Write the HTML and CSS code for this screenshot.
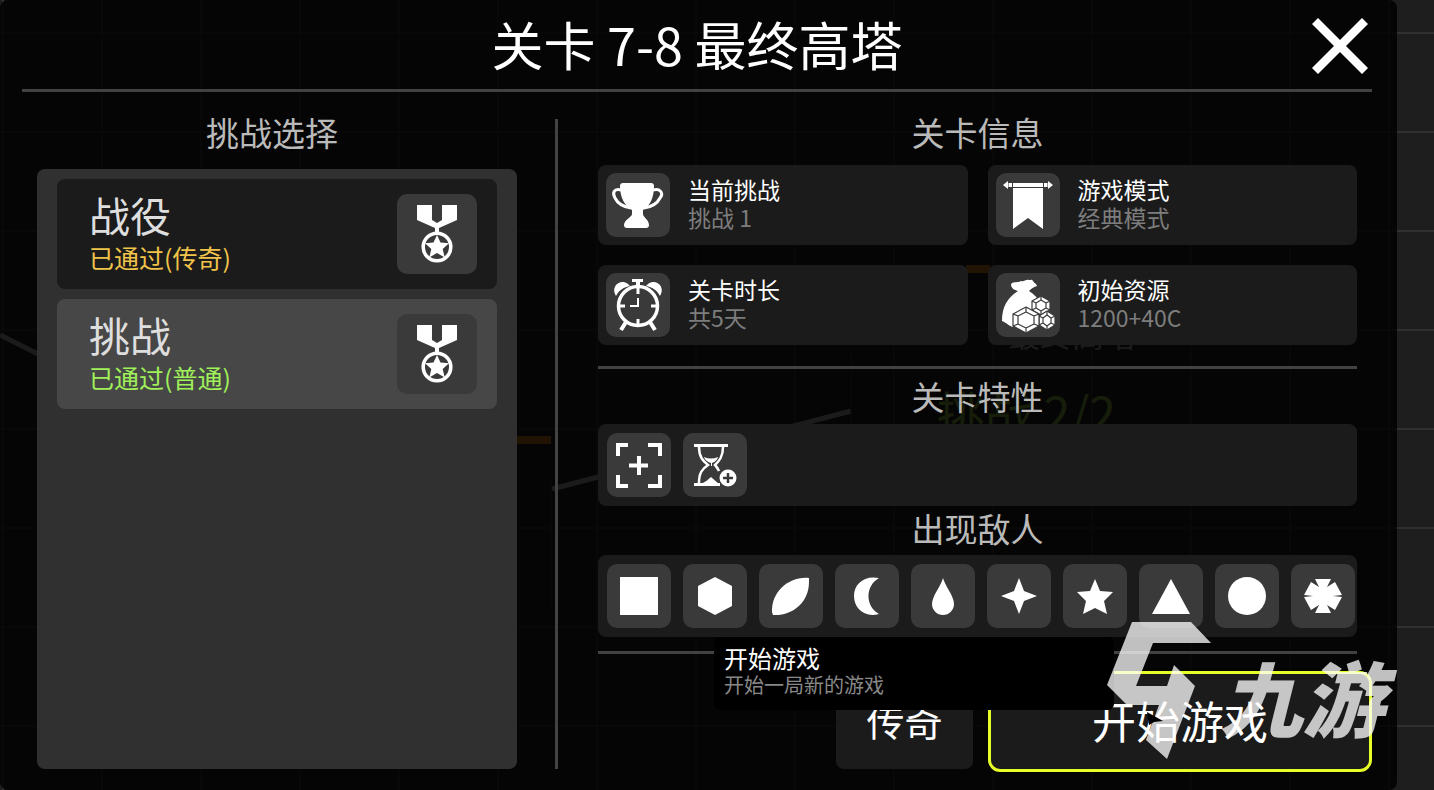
FILE: index.html
```html
<!DOCTYPE html>
<html lang="zh-CN">
<head>
<meta charset="utf-8">
<meta name="viewport" content="width=device-width, initial-scale=1">
<title>关卡 7-8 最终高塔</title>
<link rel="stylesheet" href="styles.css">
</head>
<body>
<svg class="defs" aria-hidden="true">
  <symbol id="medal" viewBox="0 0 80 80">
    <path d="M20 11h15v15l5 3 5-3V11h15v15l-18 8v5h-4v-5L20 26z"/>
    <circle cx="40" cy="53" r="13.8" fill="none" stroke="#fff" stroke-width="3.6"/>
    <path d="M40 41l3.500 7.500 8.500.8-6.300 5.700 2 8.500-7.700-4.500-7.700 4.500 2-8.500-6.300-5.700 8.500-.8z"/>
  </symbol>
</svg>

<div class="map" aria-hidden="true">
  <svg class="map-lines" width="1434" height="790">
    <g stroke="#969696" stroke-width="5">
      <path d="M0 335L40 355M552 489L851 411"/>
    </g>
    <path d="M517 440h34M966 269h24" stroke="#b46e1e" stroke-width="8"/>
    <g stroke="#303030" fill="none"><path d="M-2 480h553v130M851 350v120"/></g>
  </svg>
  <span class="map-name">最终高塔</span>
  <span class="map-progress">挑战 2/2</span>
</div>

<main class="dialog">
  <header class="header">
    <h1 class="title">关卡 7-8 最终高塔</h1>
    <button class="close" aria-label="关闭">
      <svg width="56" height="56" viewBox="0 0 56 56"><path d="M3 3l50 50M53 3L3 53" stroke="#fff" stroke-width="8.500"/></svg>
    </button>
  </header>

  <div class="columns">
    <section class="challenges">
      <h2 class="heading">挑战选择</h2>
      <div class="challenge-list">
        <button class="challenge">
          <span class="challenge-text"><span class="challenge-name">战役</span><span class="status legend">已通过(传奇)</span></span>
          <span class="badge"><svg width="80" height="80"><use href="#medal"/></svg></span>
        </button>
        <button class="challenge selected">
          <span class="challenge-text"><span class="challenge-name">挑战</span><span class="status normal">已通过(普通)</span></span>
          <span class="badge"><svg width="80" height="80"><use href="#medal"/></svg></span>
        </button>
      </div>
    </section>

    <div class="details">
      <section class="block info">
        <h2 class="heading">关卡信息</h2>
        <div class="cards">
          <div class="card">
            <span class="tile"><svg viewBox="0 0 64 64">
              <path d="M17 10h28q3 0 3 3c0 12-4 20-11 24v4c0 3 6 6 6 11q0 3-3 3H21q-3 0-3-3c0-5 8-8 8-11v-4C19 33 14 25 14 13q0-3 3-3z"/>
              <path d="M15 17C8 15 6 20 9 25c3 6 9 9 16 10M47 17c7-2 11 3 7 8-3 6-9 9-16 10" fill="none" stroke="#fff" stroke-width="3"/>
            </svg></span>
            <div class="card-text"><h3>当前挑战</h3><p>挑战 1</p></div>
          </div>
          <div class="card">
            <span class="tile"><svg viewBox="0 0 64 64">
              <path d="M7 12l5-4v8zM12.500 10H16v4h-3.500zM17 10h30v4H17zM48 10h3.500v4H48zM57 12l-5-4v8zM17 15h30v41L32 45 17 56z"/>
            </svg></span>
            <div class="card-text"><h3>游戏模式</h3><p>经典模式</p></div>
          </div>
          <div class="card">
            <span class="tile"><svg viewBox="0 0 64 64">
              <circle cx="32" cy="33" r="19.500" fill="none" stroke="#fff" stroke-width="3.500"/>
              <path d="M26 6h11v3h-3v5h-4V9h-4zM10 23c-6-9 4-18 12-12l2 2c-6 1-11 4-14 10zM54 23c6-9-4-18-12-12l-2 2c6 1 11 4 14 10z"/>
              <path d="M32 12v9M32 54v-8M11 33h8M53 33h-8" fill="none" stroke="#fff" stroke-width="3"/>
              <path d="M32 25v8h-8" fill="none" stroke="#fff" stroke-width="2"/>
              <path d="M20 49l-5 8M44 49l5 8" stroke="#fff" stroke-width="4"/>
            </svg></span>
            <div class="card-text"><h3>关卡时长</h3><p>共5天</p></div>
          </div>
          <div class="card">
            <span class="tile"><svg viewBox="0 0 64 64">
              <path d="M22 18c-4-1-7-3-7-7 3-3 7-1 10-3 3 1 5-2 8-1 2 0 3-1 4 1 2 3 3 2 4 5-4 1-6 3-8 5 5 3 9 7 12 13l-9 22H17v1c-4-1-6-4-11-6 0-14 5-23 16-30z"/>
              <g stroke="#3a3a3a" stroke-width="1.200" stroke-linejoin="round">
                <path d="M45 23l9 5v9l-9 5-9-5v-9z"/><path d="M45 27l5 3v5l-5 3-5-3v-5zM45 23v4M54 28l-4 2M54 37l-4-2M45 42v-4M36 37l4-2M36 28l4 2" fill="none"/>
                <path d="M51 38l8 5v9l-8 5-8-5v-9z"/><path d="M51 42l4 3v5l-4 3-4-3v-5zM51 38v4M59 43l-4 2M59 52l-4-2M51 57v-4M43 52l4-2M43 43l4 2" fill="none"/>
                <path d="M30 34l13 7v12l-13 7-13-7V41z"/><path d="M30 39l8 4v8l-8 4-8-4v-8zM30 34v5M43 41l-5 2M43 53l-5-2M30 60v-5M17 53l5-2M17 41l5 2" fill="none"/>
              </g>
            </svg></span>
            <div class="card-text"><h3>初始资源</h3><p>1200+40C</p></div>
          </div>
        </div>
      </section>

      <section class="block traits">
        <h2 class="heading">关卡特性</h2>
        <div class="tiles">
          <span class="tile"><svg viewBox="0 0 64 64"><path d="M11 23V12h10M41 12h12v11M11 42v11h10M41 53h12V42M32 23v19M22 32.500h19" fill="none" stroke="#fff" stroke-width="4"/></svg></span>
          <span class="tile"><svg viewBox="0 0 64 64">
            <path d="M11 11h34v3H11zM11 50h26v3H11z"/>
            <path d="M16 14c0 10 4 14 9 18-6 4-9 8-9 18M40 14c0 10-4 14-8 18 2 2 3 4 4 6" fill="none" stroke="#fff" stroke-width="2.500"/>
            <path d="M21 24q7 3 14 0-1 4-6 6v3h-1v-3q-6-2-7-6zM18 51q5-2 10-7l8 7z"/>
            <circle cx="45" cy="45" r="8.500"/><path d="M45 40v10M40 45h10" stroke="#3a3a3a" stroke-width="2.500"/>
          </svg></span>
        </div>
      </section>

      <section class="block enemies">
        <h2 class="heading">出现敌人</h2>
        <div class="tiles">
          <span class="tile"><svg viewBox="0 0 64 64"><path d="M13 13h38v38H13z"/></svg></span>
          <span class="tile"><svg viewBox="0 0 64 64"><path d="M32 13l17 9v20l-17 9-17-9V22z"/></svg></span>
          <span class="tile"><svg viewBox="0 0 64 64"><path d="M50 14C30 12 12 28 13 48l1 3C34 52 50 38 50 18z"/></svg></span>
          <span class="tile"><svg viewBox="0 0 64 64"><path d="M44 14C29 11 19 20 19 32s10 22 25 18C30 42 30 22 44 14z"/></svg></span>
          <span class="tile"><svg viewBox="0 0 64 64"><path d="M32 14c2 8 11 18 11 26a11 11 0 0 1-22 0c0-8 9-18 11-26z"/></svg></span>
          <span class="tile"><svg viewBox="0 0 64 64"><path d="M32 14l5 13 13 5-13 5-5 13-5-13-13-5 13-5z"/></svg></span>
          <span class="tile"><svg viewBox="0 0 64 64"><path d="M32 15l5 12 13 1-9 9 3 13-12-6-12 6 3-13-9-9 13-1z"/></svg></span>
          <span class="tile"><svg viewBox="0 0 64 64"><path d="M32 15l19 35H13z"/></svg></span>
          <span class="tile"><svg viewBox="0 0 64 64"><circle cx="32" cy="32" r="19"/></svg></span>
          <span class="tile"><svg viewBox="0 0 64 64"><path d="M24 15h16l-4 8 8-5 7 13-9 1 9 1-7 13-8-5 4 8H24l4-8-8 5-7-13 9-1-9-1 7-13 8 5z"/></svg></span>
        </div>
      </section>

      <footer class="footer">
        <button class="mode">传奇</button>
        <button class="start">开始游戏</button>
        <div class="tooltip" role="tooltip"><strong>开始游戏</strong><span>开始一局新的游戏</span></div>
      </footer>
    </div>
  </div>
</main>

<div class="watermark">
  <svg width="120" height="150" viewBox="0 0 120 150"><path d="M32 7h59l20 21H53L36 71h31l7-21 21 21-28 73-21-19 13-35H27L7 70z"/></svg>
  <span>九游</span>
</div>
<svg class="cursor" width="18" height="14" viewBox="0 0 18 14" aria-hidden="true"><path d="M1 0l16 9-9 1-5 3z" fill="#000"/></svg>
</body>
</html>
```

FILE: styles.css
```css
* { box-sizing: border-box; }

body {
  margin: 0;
  min-height: 100vh;
  position: relative;
  overflow-x: hidden;
  color: #fff;
  font-family: "Noto Sans CJK SC", "Noto Sans", sans-serif;
  background-color: #1e1e1e;
  background-image:
    linear-gradient(#303030 2px, transparent 2px),
    linear-gradient(90deg, #303030 2px, transparent 2px);
  background-size: 99px 99px;
  background-position: 2px 32px;
}

h1, h2, h3, p { margin: 0; font-weight: 400; }

button {
  border: 0;
  padding: 0;
  color: inherit;
  font: inherit;
  cursor: pointer;
}

svg { display: block; fill: #fff; }

.defs { position: absolute; width: 0; height: 0; }

/* Level map behind the dialog */
.map { position: absolute; inset: 0; overflow: hidden; }
.map-lines { fill: none; }
.map-name,
.map-progress { position: absolute; white-space: nowrap; }
.map-name { left: 1008px; top: 310px; font-size: 32px; color: #969696; }
.map-progress { left: 937px; top: 376px; font-size: 48px; color: #7da03c; }

.dialog {
  position: relative;
  display: flex;
  flex-direction: column;
  min-height: 100vh;
  margin-right: 37px;
  padding: 0 25px 18px 22px;
  border-radius: 8px;
  background: rgba(0, 0, 0, 0.82);
}

.header {
  display: grid;
  grid-template-columns: 1fr auto 1fr;
  align-items: center;
  height: 92px;
  padding: 2px 4px 0 4px;
  border-bottom: 3px solid #424242;
}
.title { grid-column: 2; padding-bottom: 4px; font-size: 52px; line-height: 82px; }
.close { justify-self: end; background: none; }

.columns { flex: 1; display: flex; padding-top: 20px; }

.heading {
  padding-bottom: 4px;
  font-size: 33px;
  line-height: 40px;
  text-align: center;
  color: #bababa;
}

.challenges {
  flex: 0 0 536px;
  display: flex;
  flex-direction: column;
  padding: 0 41px 3px 15px;
  position: relative;
}
.challenges::after {
  content: "";
  position: absolute;
  top: 7px;
  right: 0;
  bottom: 3px;
  width: 3px;
  background: #424242;
}
.challenges .heading { padding-right: 10px; }

.challenge-list {
  flex: 1;
  display: flex;
  flex-direction: column;
  gap: 10px;
  margin-top: 13px;
  padding: 10px 20px;
  border-radius: 8px;
  background: #303030;
}
.challenge {
  display: flex;
  align-items: center;
  justify-content: space-between;
  height: 110px;
  padding: 0 20px 0 32px;
  border-radius: 8px;
  background: #1b1b1b;
  text-align: left;
}
.challenge.selected { background: #474747; }
.challenge-text { display: flex; flex-direction: column; padding-bottom: 5px; }
.challenge-name { font-size: 41px; line-height: 50px; color: #dedede; }
.status { font-size: 25px; line-height: 36px; }
.legend { color: #f0c44a; }
.normal { color: #a0f05a; }
.badge { border-radius: 10px; background: #3a3a3a; }

.details {
  flex: 1;
  display: flex;
  flex-direction: column;
  min-width: 0;
  padding-left: 40px;
}
.block { padding-right: 15px; }

.cards {
  display: grid;
  grid-template-columns: 1fr 1fr;
  gap: 20px;
  margin: 9px 0 21px;
}
.card {
  display: flex;
  align-items: center;
  gap: 18px;
  height: 80px;
  padding: 0 8px;
  border-radius: 8px;
  background: #1b1b1b;
}
.card-text { padding-bottom: 4px; }
.card h3 { font-size: 23px; line-height: 28px; }
.card p { font-size: 23px; line-height: 28px; color: #7d7d7d; }

.tile {
  flex: none;
  width: 64px;
  height: 64px;
  border-radius: 10px;
  background: #3a3a3a;
}

.tiles {
  display: flex;
  gap: 12px;
  padding: 9px 0 9px 9px;
  border-radius: 8px;
  background: #1b1b1b;
}

.traits { padding-top: 10px; position: relative; }
.traits::before,
.footer::before {
  content: "";
  position: absolute;
  left: 0;
  right: 15px;
  height: 3px;
  background: #424242;
}
.traits::before { top: 0; }
.traits .tiles { margin: 4px 0 2px; }
.enemies .tiles { margin-top: 3px; }

.footer {
  position: relative;
  display: flex;
  justify-content: flex-end;
  align-items: center;
  gap: 15px;
  padding-top: 34px;
}
.footer::before { top: 14px; }
.mode,
.start { padding-bottom: 4px; background: #1b1b1b; border-radius: 8px; }
.mode { width: 137px; height: 95px; font-size: 38px; }
.start {
  width: 384px;
  height: 101px;
  border: 3px solid #e6ff28;
  border-radius: 12px;
  font-size: 44px;
}

.tooltip {
  position: absolute;
  right: 258px;
  top: 0;
  display: flex;
  flex-direction: column;
  width: 400px;
  padding: 7px 10px 12px;
  border-radius: 6px;
  background: #000;
}
.tooltip strong { font-size: 24px; line-height: 28px; font-weight: 400; }
.tooltip span { font-size: 20px; line-height: 26px; color: #888; }

.watermark {
  position: absolute;
  right: 50px;
  bottom: 25px;
  display: flex;
  align-items: center;
  opacity: 0.75;
  pointer-events: none;
}
.watermark span {
  padding-top: 12px;
  font: italic 900 82px/86px "Noto Sans CJK SC", sans-serif;
}

.cursor { position: absolute; left: 1146px; top: 712px; }
```
